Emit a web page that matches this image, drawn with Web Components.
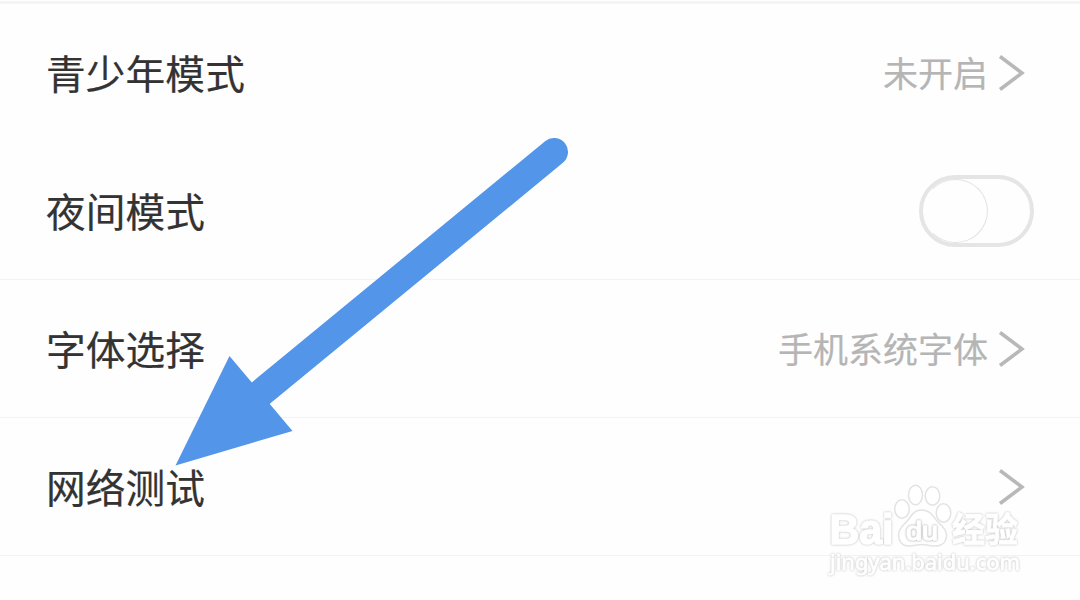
<!DOCTYPE html>
<html lang="zh-CN">
<head>
<meta charset="utf-8">
<title>设置</title>
<style>
  body {
    margin: 0;
    width: 1080px;
    height: 600px;
    overflow: hidden;
    background: #fefefe;
    font-family: "Noto Sans CJK SC", "Liberation Sans", sans-serif;
  }
</style>
</head>
<body>
<settings-page>
  <setting-row label="青少年模式" plain><value-link slot="end">未开启</value-link></setting-row>
  <setting-row label="夜间模式"><toggle-switch slot="end"></toggle-switch></setting-row>
  <setting-row label="字体选择"><value-link slot="end">手机系统字体</value-link></setting-row>
  <setting-row label="网络测试"><value-link slot="end"></value-link></setting-row>
  <pointer-arrow slot="overlay"></pointer-arrow>
  <site-watermark slot="overlay"></site-watermark>
</settings-page>

<script>
class SettingsPage extends HTMLElement {
  constructor() {
    super();
    this.attachShadow({ mode: 'open' });
    this.shadowRoot.innerHTML = `
      <style>
        :host {
          display: block;
          position: relative;
          box-sizing: border-box;
          height: 600px;
          padding-top: 1px;
        }
        .divider { height: 3px; background: #f5f5f5; }
      </style>
      <div class="divider"></div>
      <slot></slot>
      <slot name="overlay"></slot>
    `;
  }
}

class SettingRow extends HTMLElement {
  constructor() {
    super();
    this.attachShadow({ mode: 'open' });
    this.shadowRoot.innerHTML = `
      <style>
        :host {
          display: flex;
          align-items: center;
          justify-content: space-between;
          box-sizing: border-box;
          height: 138px;
          padding: 0 46px;
          border-bottom: 1px solid #f3f3f3;
          color: #333;
          font-size: 39.7px;
          line-height: 60px;
        }
        :host([plain]) { border-bottom-color: transparent; }
        .label {
          padding-bottom: 1px;
          letter-spacing: 0.1px;
          -webkit-text-stroke: 0.2px #333;
        }
      </style>
      <span class="label"></span>
      <slot name="end"></slot>
    `;
  }

  connectedCallback() {
    this.shadowRoot.querySelector('.label').textContent = this.getAttribute('label');
  }
}

// grey value text followed by a chevron
class ValueLink extends HTMLElement {
  constructor() {
    super();
    this.attachShadow({ mode: 'open' });
    this.shadowRoot.innerHTML = `
      <style>
        :host {
          display: flex;
          align-items: center;
          gap: 10px;
          margin-right: 8px;
          color: #b5b5b5;
          font-size: 35px;
          line-height: 52px;
        }
        .value { padding-bottom: 1px; -webkit-text-stroke: 0.2px #b5b5b5; }
        svg { display: block; }
      </style>
      <span class="value"><slot></slot></span>
      <svg width="28" height="38" viewBox="0 0 28 38" fill="none" stroke="#b8b8b8" stroke-width="3.500">
        <path d="M2 2.500 L24 19 L2 35.500"/>
      </svg>
    `;
  }
}

class ToggleSwitch extends HTMLElement {
  constructor() {
    super();
    this.attachShadow({ mode: 'open' });
    this.shadowRoot.innerHTML = `
      <style>
        :host {
          display: block;
          box-sizing: border-box;
          width: 115px;
          height: 72px;
          border: 4px solid #e5e5e5;
          border-radius: 36px;
        }
        .knob {
          box-sizing: border-box;
          width: 65px;
          height: 64px;
          border: 1px solid #e2e2e2;
          border-left-color: transparent;
          border-radius: 50%;
        }
      </style>
      <div class="knob"></div>
    `;
  }
}

class PointerArrow extends HTMLElement {
  constructor() {
    super();
    this.attachShadow({ mode: 'open' });
    this.shadowRoot.innerHTML = `
      <style>
        :host { position: absolute; left: 0; top: 0; pointer-events: none; }
        svg { display: block; }
      </style>
      <svg width="600" height="480" viewBox="0 0 600 480">
        <path d="M554 152 L250 402" stroke="#5295e9" stroke-width="28" stroke-linecap="round"/>
        <path d="M175.500 465.500 L229.500 356 L292.500 431 Z" fill="#5295e9"/>
      </svg>
    `;
  }
}

// white lettering, readable only by its soft grey halo
class SiteWatermark extends HTMLElement {
  constructor() {
    super();
    this.attachShadow({ mode: 'open' });
    this.shadowRoot.innerHTML = `
      <style>
        :host { position: absolute; left: 820px; top: 476px; pointer-events: none; }
        svg { display: block; }
        text, .paw {
          fill: #fff;
          stroke: #fff;
          stroke-width: 1.5px;
          stroke-linejoin: round;
          filter: drop-shadow(0 0 0.8px #bbb);
        }
        .paw { stroke: #e3e3e3; filter: none; }
        .latin { font-family: "Liberation Sans", sans-serif; font-weight: bold; }
        .cjk { stroke-width: 0.8px; }
        .url { font-family: "Noto Sans", sans-serif; stroke-width: 0.8px; }
        .du { font-weight: normal; filter: drop-shadow(0 0 0.8px #999); }
      </style>
      <svg width="220" height="110" viewBox="0 0 220 110">
        <text class="latin" x="9.500" y="67.500" font-size="42" textLength="64" lengthAdjust="spacingAndGlyphs">Bai</text>
        <g class="paw">
          <ellipse cx="82" cy="33" rx="7.300" ry="9.300"/>
          <ellipse cx="95.500" cy="19" rx="7" ry="9.700"/>
          <ellipse cx="112.500" cy="20" rx="7.300" ry="9.300"/>
          <ellipse cx="123.500" cy="37" rx="7.300" ry="9.300"/>
          <path d="M102 34 C110 34 113 40 117 45 C121 49 126.500 53 126.500 59 C126.500 66 122 70 115 70 C109 70 107 68.500 102 68.500 C97 68.500 94 70 89 70 C82 70 78.500 65 78.500 59 C78.500 52 84 49 88 44 C92 39 94 34 102 34 Z"/>
        </g>
        <text class="latin du" x="86" y="64" font-size="26" textLength="32" lengthAdjust="spacingAndGlyphs">du</text>
        <text class="cjk" x="132" y="66" font-size="34" font-weight="bold" textLength="66" lengthAdjust="spacingAndGlyphs">经验</text>
        <text class="url" x="10" y="94" font-size="22" textLength="190" lengthAdjust="spacingAndGlyphs">jingyan.baidu.com</text>
      </svg>
    `;
  }
}

customElements.define('settings-page', SettingsPage);
customElements.define('setting-row', SettingRow);
customElements.define('value-link', ValueLink);
customElements.define('toggle-switch', ToggleSwitch);
customElements.define('pointer-arrow', PointerArrow);
customElements.define('site-watermark', SiteWatermark);
</script>
</body>
</html>
